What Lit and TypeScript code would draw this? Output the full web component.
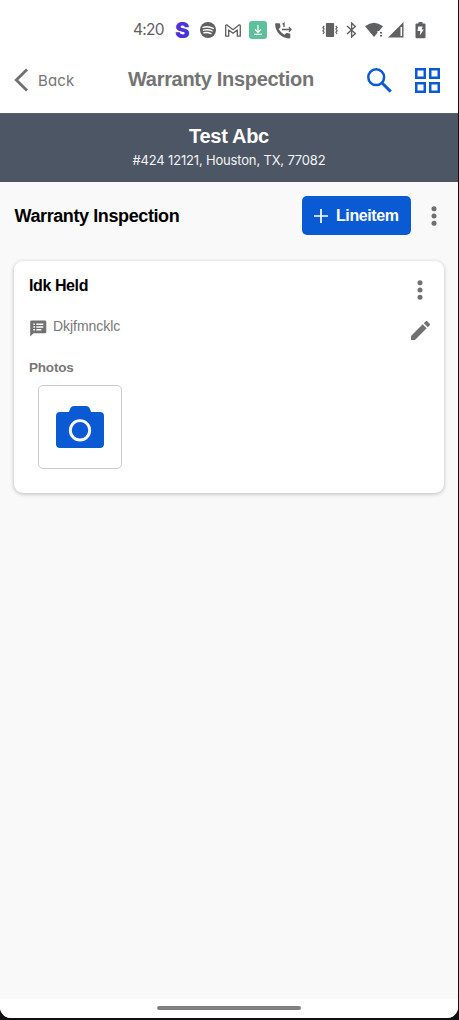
import { LitElement, html, css } from "lit";
import { customElement, property } from "lit/decorators.js";

@customElement("status-bar")
class StatusBar extends LitElement {
  static styles = css`
    :host { display: flex; height: 60px; align-items: center; color: #5f6062; box-sizing: border-box; padding-left: 133px; }
    svg { display: block; flex: none; fill: currentColor; }
    .time { font: 15.500px/20px "Inter", sans-serif; width: 42px; letter-spacing: -0.7px; white-space: nowrap; }
    .brand { font: 900 22px/20px "Inter", sans-serif; color: #4a35d8; width: 25px; height: 20px; }
    .spotify { margin-right: 9px; }
    .mail { margin-right: 8px; }
    .download { margin-right: 8px; }
    .call { margin-right: 30px; }
    .vibrate { margin-right: 8px; }
    .bluetooth { margin-right: 8px; }
    .wifi { margin-right: 3px; }
    .signal { margin-right: 11px; }
  `;
  render() {
    return html`
      <span class="time">4:20</span>
      <span class="brand">S</span>
      <svg class="spotify" width="16" height="16" viewBox="0 0 16 16">
        <circle cx="8" cy="8" r="8" />
        <path d="M3 5.400q5.500-1.700 10.300 1M3.500 8.200q4.600-1.300 8.700.8M4 10.800q3.800-1 7 .8" fill="none" stroke="#fff" stroke-width="1.400" stroke-linecap="round" />
      </svg>
      <svg class="mail" width="16" height="13" viewBox="0 0 16 13">
        <path d="M.7 12.200V1.700Q.7.700 2 1l6 4.700L14 1q1.300-.3 1.300.7v10.500h-3V6L8 9.300 3.700 6v6.200z" fill="none" stroke="currentColor" stroke-width="1.300" stroke-linejoin="round" />
      </svg>
      <svg class="download" width="18" height="18" viewBox="0 0 18 18">
        <rect width="18" height="18" rx="3" fill="#5dc09b" />
        <path d="M9 4v7M6 8.300l3 3 3-3M5 13.300h8" fill="none" stroke="#fff" stroke-width="1.200" />
      </svg>
      <svg class="call" width="17" height="17" viewBox="0 0 17 17">
        <path d="M.9 1.200h3.200q.8 0 .9.800l.5 2.700q.1.500-.3.900L3.700 7.100q2 3.900 5.700 5.700l1.600-1.600q.4-.4.900-.3l2.700.6q.7.200.7.900v3.200q0 .8-.8.800Q8.500 16.500 4.200 12.100.2 7.800.1 2q0-.8.8-.8z" />
        <path d="M7.500 2.200l1.500-1V5M7 7.500H16M13.900 5.200L16.200 7.500l-2.300 2.300" fill="none" stroke="currentColor" stroke-width="1.300" />
      </svg>
      <svg class="vibrate" width="16" height="16" viewBox="0 0 16 16">
        <rect x="3.900" y="1" width="8.200" height="14" rx="1" />
        <path d="M2.200 4L.9 5.500l1.200 1.600L.9 8.700l1.200 1.600L.9 12M13.800 4l1.300 1.500-1.200 1.600 1.200 1.600-1.200 1.600 1.200 1.700" fill="none" stroke="currentColor" stroke-width="1.200" />
      </svg>
      <svg class="bluetooth" width="11" height="16" viewBox="0 0 11 16">
        <path d="M1 4l8.300 7.500L5.600 15V1l3.700 3.500L1 12" fill="none" stroke="currentColor" stroke-width="1.400" />
      </svg>
      <svg class="wifi" width="20" height="16" viewBox="0 0 20 16">
        <path d="M0 4.300Q9-3 18 4.300l-4 4.600h-1.600v2L9 15z" />
        <path d="M15 10h2v1.500h-2zM15 13h2v1.500h-2z" />
      </svg>
      <svg class="signal" width="16" height="16" viewBox="0 0 16 16">
        <path fill-rule="evenodd" d="M0 15.500L15.500 0v15.500zM12.500 5v9h1.600V5z" />
      </svg>
      <svg width="11" height="17" viewBox="0 0 11 17">
        <path d="M3.500 0h4v1.500h2q1 0 1 1V15q0 1.300-1.200 1.300H1.700Q.5 16.300.5 15V2.500q0-1 1-1h2z" />
        <path d="M3.200 4.500h4.500L6.600 7.500h2.200l-4 6 .5-4.500H2.500z" fill="#fff" />
      </svg>
    `;
  }
}

@customElement("more-dots")
class MoreDots extends LitElement {
  static styles = css`
    :host { display: block; width: 6px; height: 20px; }
    svg { display: block; fill: #707070; }
  `;
  render() {
    return html`<svg width="6" height="20" viewBox="0 0 6 20">
      <circle cx="3" cy="2.800" r="2.500" /><circle cx="3" cy="10" r="2.500" /><circle cx="3" cy="17.200" r="2.500" />
    </svg>`;
  }
}

@customElement("line-item-card")
class LineItemCard extends LitElement {
  @property() name = "";
  @property() note = "";
  static styles = css`
    :host { display: block; box-sizing: border-box; margin: 12px 14px 0; height: 232px; padding: 15px 14px 0 15px; background: #fff; border-radius: 9px; box-shadow: 0 1px 4px rgba(0, 0, 0, 0.26); font-family: "Liberation Sans", Arial, sans-serif; color: #777; }
    svg { display: block; flex: none; }
    .top { display: flex; justify-content: space-between; height: 40px; padding-right: 7px; }
    .name { font-weight: 700; font-size: 16px; line-height: 20px; letter-spacing: -0.4px; color: #000; }
    more-dots { margin-top: 4px; }
    .note { display: flex; align-items: flex-start; height: 44px; }
    .note svg:first-child { margin: 4px 6px 0 1px; }
    .text { flex: 1; font-size: 14px; line-height: 20px; letter-spacing: -0.05px; }
    .edit { margin-top: 5px; margin-right: 0.5px; }
    .label { font-weight: 700; font-size: 13.500px; line-height: 16px; letter-spacing: -0.2px; }
    .photo { display: grid; place-items: center; box-sizing: border-box; width: 84px; height: 84px; margin: 9px 0 0 9px; border: 1px solid #ccc; border-radius: 5px; }
  `;
  render() {
    return html`
      <div class="top"><span class="name">${this.name}</span><more-dots></more-dots></div>
      <div class="note">
        <svg width="17" height="17" viewBox="0 0 17 17">
          <path d="M1.500.5h13.500q1.300 0 1.300 1.300v10.200q0 1.300-1.300 1.300H3.500L.2 16.500V1.800Q.2.500 1.500.5z" fill="#717171" />
          <path d="M3.300 3.500h1.700v1.500H3.300zM6.300 3.500h7v1.500h-7zM3.300 6.200h1.700v1.500H3.300zM6.300 6.200h7v1.500h-7zM3.300 8.900h1.700v1.500H3.300zM6.300 8.900h5v1.500h-5z" fill="#fff" />
        </svg>
        <span class="text">${this.note}</span>
        <svg class="edit" width="19" height="19" viewBox="3 3 18 18" fill="#717171">
          <path d="M3 17.250V21h3.750L17.810 9.940l-3.750-3.750zM20.710 7.040a1 1 0 0 0 0-1.410l-2.340-2.340a1 1 0 0 0-1.410 0l-1.830 1.830 3.750 3.750z" />
        </svg>
      </div>
      <div class="label">Photos</div>
      <div class="photo">
        <svg width="48" height="42" viewBox="0 0 48 42">
          <path d="M4 6h9l.8-2.500Q15 0 18 0h12q3 0 4.200 3.500L35 6h9q4 0 4 4v28q0 4-4 4H4q-4 0-4-4V10q0-4 4-4z" fill="#095ad3" />
          <circle cx="24" cy="24.300" r="9.700" fill="none" stroke="#fff" stroke-width="2.900" />
        </svg>
      </div>
    `;
  }
}

@customElement("app-root")
class AppRoot extends LitElement {
  static styles = css`
    :host { display: block; width: 459px; height: 1020px; box-sizing: border-box; padding: 0 1px 2px 0; background: #101012; overflow: hidden; font-family: "Liberation Sans", Arial, sans-serif; }
    svg { display: block; flex: none; }
    .screen { display: flex; flex-direction: column; height: 1018px; background: #f9f9f9; border-radius: 0 0 11px 11px; overflow: hidden; }
    status-bar, .nav { background: #fff; }
    .nav { display: flex; align-items: center; height: 53px; padding: 0 18.500px 13px 14px; box-sizing: border-box; }
    .back { font: 15px/20px "Inter", sans-serif; font-feature-settings: "cv11"; letter-spacing: 0.15px; color: #757575; width: 90px; margin-left: 10px; padding-top: 1px; }
    .title { font-weight: 700; font-size: 20px; line-height: 24px; letter-spacing: -0.3px; color: #747474; flex: 1; white-space: nowrap; padding-bottom: 2px; }
    .search { margin-right: 22.500px; }
    .banner { height: 69px; box-sizing: border-box; padding-top: 10px; background: #4d5664; color: #fff; text-align: center; border-top: 1px solid #58645f; }
    .client { font-weight: 700; font-size: 20px; line-height: 24px; letter-spacing: -0.3px; }
    .address { font: 13px/20px "Inter", sans-serif; font-feature-settings: "cv11"; letter-spacing: -0.17px; margin-top: 2px; color: #f2f4f8; }
    .bar { display: flex; align-items: center; height: 67px; padding: 0 21px 0 14.500px; }
    .heading { flex: 1; font-weight: 700; font-size: 18px; line-height: 22px; letter-spacing: -0.4px; color: #000; padding-top: 1px; }
    .add { display: flex; align-items: center; gap: 8px; box-sizing: border-box; width: 109px; height: 39px; padding: 0 0 0 12px; margin-right: 20px; border: 0; border-radius: 5px; background: #095ad3; color: #fff; font: 700 16px/20px "Liberation Sans", Arial, sans-serif; letter-spacing: -0.4px; }
    .fill { flex: 1; }
    .home { display: flex; justify-content: center; height: 19px; background: #fff; }
    .pill { width: 144px; height: 4px; margin-top: 7px; border-radius: 2px; background: #808080; }
  `;
  render() {
    return html`
      <div class="screen">
        <status-bar></status-bar>
        <div class="nav">
          <svg width="14" height="24" viewBox="0 0 14 24"><path d="M13 1.500L2.300 12 13 22.500" fill="none" stroke="#707070" stroke-width="2.800" /></svg>
          <span class="back">Back</span>
          <span class="title">Warranty Inspection</span>
          <svg class="search" width="25" height="25" viewBox="0 0 25 25" fill="none" stroke="#095ad3">
            <circle cx="9.200" cy="9.200" r="7.900" stroke-width="2.500" /><path d="M14.800 14.800l9 8.800" stroke-width="3" />
          </svg>
          <svg width="25" height="25" viewBox="0 0 25 25" fill="none" stroke="#095ad3" stroke-width="2.500">
            <rect x="1.250" y="1.250" width="8.500" height="8.500" /><rect x="15.250" y="1.250" width="8.500" height="8.500" />
            <rect x="1.250" y="15.250" width="8.500" height="8.500" /><rect x="15.250" y="15.250" width="8.500" height="8.500" />
          </svg>
        </div>
        <div class="banner">
          <div class="client">Test Abc</div>
          <div class="address">#424 12121, Houston, TX, 77082</div>
        </div>
        <div class="bar">
          <span class="heading">Warranty Inspection</span>
          <button class="add">
            <svg width="14" height="14" viewBox="0 0 14 14"><path d="M7 0v14M0 7h14" stroke="#fff" stroke-width="1.700" /></svg>
            <span>Lineitem</span>
          </button>
          <more-dots></more-dots>
        </div>
        <line-item-card name="Idk Held" note="Dkjfmncklc"></line-item-card>
        <div class="fill"></div>
        <div class="home"><div class="pill"></div></div>
      </div>
    `;
  }
}
